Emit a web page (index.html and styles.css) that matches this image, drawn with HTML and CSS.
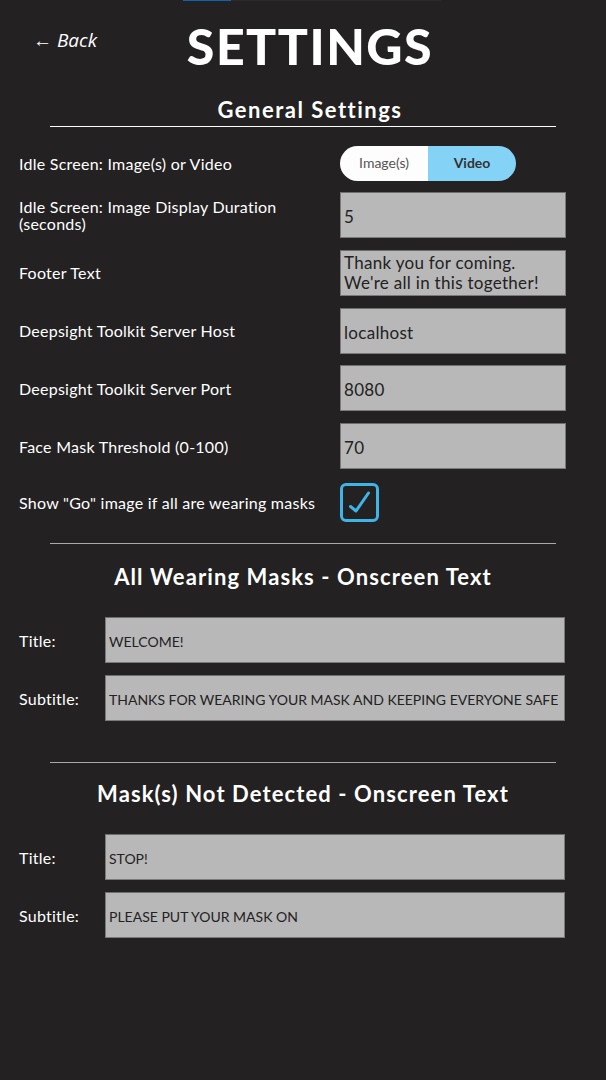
FILE: index.html
```html
<!DOCTYPE html>
<html>
<head>
<meta charset="utf-8">
<link rel="stylesheet" href="styles.css">
</head>
<body>
<div class="topbar"><span class="topbar-active"></span><span class="topbar-rest"></span></div>
<header class="header">
  <a class="back">&larr; Back</a>
  <h1 class="title">SETTINGS</h1>
</header>

<section class="section general">
  <h2 class="section-title">General Settings</h2>
  <hr class="rule rule-white">
  <div class="rows">
    <div class="row row-toggle">
      <label class="label">Idle Screen: Image(s) or Video</label>
      <div class="toggle">
        <span class="toggle-opt">Image(s)</span>
        <span class="toggle-opt active">Video</span>
      </div>
    </div>
    <div class="row">
      <label class="label">Idle Screen: Image Display Duration (seconds)</label>
      <div class="input"><span class="input-text">5</span></div>
    </div>
    <div class="row">
      <label class="label">Footer Text</label>
      <div class="input input-multi"><span class="input-text">Thank you for coming.<br>We're all in this together!</span></div>
    </div>
    <div class="row">
      <label class="label">Deepsight Toolkit Server Host</label>
      <div class="input"><span class="input-text">localhost</span></div>
    </div>
    <div class="row">
      <label class="label">Deepsight Toolkit Server Port</label>
      <div class="input"><span class="input-text">8080</span></div>
    </div>
    <div class="row">
      <label class="label">Face Mask Threshold (0-100)</label>
      <div class="input"><span class="input-text">70</span></div>
    </div>
    <div class="row row-check">
      <label class="label">Show "Go" image if all are wearing masks</label>
      <div class="checkbox">
        <svg width="39" height="39" viewBox="0 0 39 39"><path d="M10.5 23.5 L16 28 L28.5 10" fill="none" stroke="#3db5e8" stroke-width="3" stroke-linecap="round" stroke-linejoin="round"/></svg>
      </div>
    </div>
  </div>
</section>

<section class="section onscreen first-onscreen">
  <hr class="rule rule-grey">
  <h2 class="section-title">All Wearing Masks - Onscreen Text</h2>
  <div class="rows rows-text">
    <div class="row row-text">
      <label class="label">Title:</label>
      <div class="input input-caps"><span class="input-text">WELCOME!</span></div>
    </div>
    <div class="row row-text">
      <label class="label">Subtitle:</label>
      <div class="input input-caps"><span class="input-text">THANKS FOR WEARING YOUR MASK AND KEEPING EVERYONE SAFE</span></div>
    </div>
  </div>
</section>

<section class="section onscreen second-onscreen">
  <hr class="rule rule-grey">
  <h2 class="section-title">Mask(s) Not Detected - Onscreen Text</h2>
  <div class="rows rows-text">
    <div class="row row-text">
      <label class="label">Title:</label>
      <div class="input input-caps"><span class="input-text">STOP!</span></div>
    </div>
    <div class="row row-text">
      <label class="label">Subtitle:</label>
      <div class="input input-caps"><span class="input-text">PLEASE PUT YOUR MASK ON</span></div>
    </div>
  </div>
</section>
</body>
</html>
```

FILE: styles.css
```css
* { box-sizing: border-box; }
html, body {
  margin: 0;
  padding: 0;
  background: #232122;
  color: #ffffff;
  font-family: Lato, "Noto Sans", sans-serif;
  height: 1080px;
  overflow: hidden;
}
.topbar {
  position: absolute;
  top: 0;
  left: 183px;
  height: 1px;
  display: flex;
}
.topbar-active { width: 48px; background: #1262ad; }
.topbar-rest { width: 210px; background: #2a2a2a; }

.header {
  display: grid;
  grid-template-columns: 1fr auto 1fr;
  align-items: center;
  padding: 16px 0 0 0;
  height: 75px;
}
.back {
  grid-column: 1;
  grid-row: 1;
  justify-self: start;
  margin-left: 33px;
  font-family: "Open Sans", sans-serif;
  font-style: italic;
  font-size: 19px;
  color: #ffffff;
  margin-top: -12px;
}
.title {
  grid-column: 2;
  grid-row: 1;
  margin: 0 0 0 14px;
  font-size: 50px;
  font-weight: 900;
  letter-spacing: 1.5px;
  line-height: 1;
}

.section-title {
  margin: 0;
  text-align: center;
  font-size: 22px;
  font-weight: 700;
  line-height: 1;
  letter-spacing: 1.1px;
}
.general .section-title {
  margin-top: 24px;
  padding-left: 14px;
  letter-spacing: 1.5px;
}
.rule {
  margin: 0 50px;
  border: 0;
  height: 1px;
}
.rule-white { background: #ffffff; margin-top: 5px; }
.rule-grey { background: #a9a9a9; }

.rows {
  display: flex;
  flex-direction: column;
  gap: 11.75px;
  padding: 19px 0 0 19px;
}
.row {
  display: grid;
  grid-template-columns: 321px 226px;
  align-items: center;
}
.row-toggle { margin-bottom: -0.75px; }
.label {
  font-size: 16px;
  line-height: 17px;
  color: #ffffff;
  padding-right: 10px;
  letter-spacing: 0.25px;
}
.input {
  height: 46px;
  background: #b8b8b8;
  border: 1px solid #7a7a7a;
  border-top-color: #6e6e6e;
  color: #222222;
  font-size: 17px;
  letter-spacing: 0.3px;
  display: flex;
  align-items: center;
  padding: 3px 3px 0;
  overflow: hidden;
  white-space: nowrap;
}
.input-multi {
  align-items: flex-start;
  line-height: 20px;
  padding-top: 2px;
}
.toggle {
  display: flex;
  width: 176px;
  height: 35px;
  border-radius: 18px;
  overflow: hidden;
}
.toggle-opt {
  flex: 1;
  display: flex;
  align-items: center;
  justify-content: center;
  background: #fdfdfd;
  color: #555555;
  font-size: 14px;
  padding-bottom: 2px;
}
.toggle-opt.active {
  background: #84d2f6;
  color: #333333;
  font-weight: 700;
}
.row-check { margin-top: 2.25px; }
.checkbox {
  width: 39px;
  height: 39px;
  border: 3px solid #3db5e8;
  border-radius: 6px;
  position: relative;
}
.checkbox svg {
  position: absolute;
  left: -3px;
  top: -3px;
}

.first-onscreen { margin-top: 21px; }
.onscreen .section-title { margin-top: 22px; }
.second-onscreen .section-title { margin-top: 20px; }
.rows-text { padding-top: 29px; gap: 12px; }
.row-text { grid-template-columns: 86px 460px; }
.input-caps { font-size: 14px; letter-spacing: 0; padding-left: 3px; }
.second-onscreen { margin-top: 41px; }
```
